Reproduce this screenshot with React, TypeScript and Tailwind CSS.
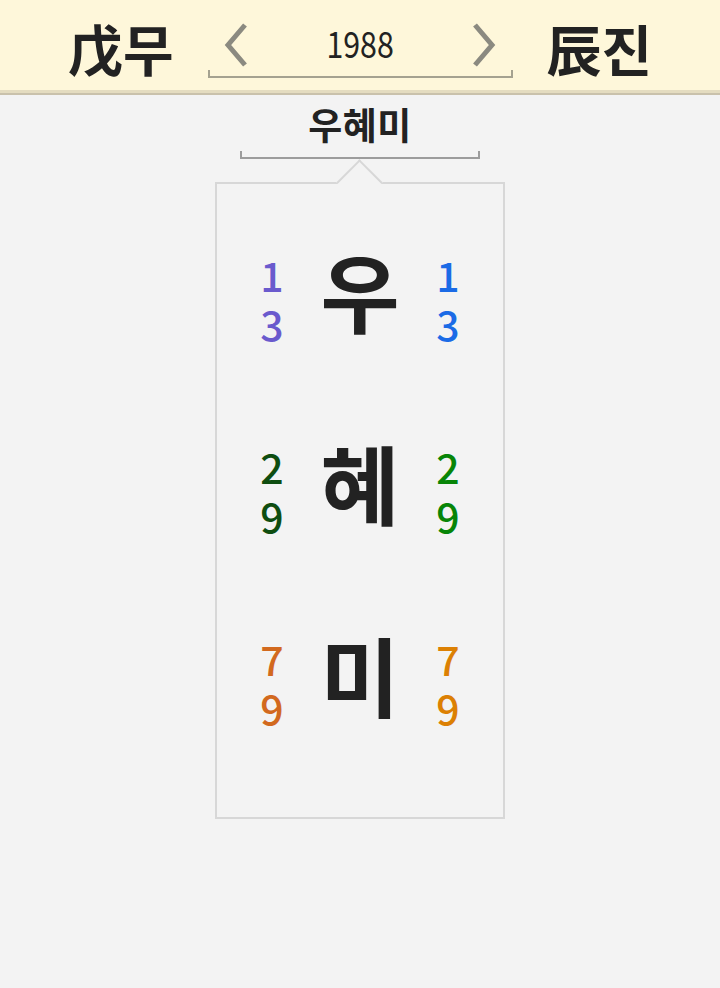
import React from 'react';

const FONT = '"Noto Sans CJK KR", "Noto Sans", sans-serif';

const ROWS = [
  { char: '우', left: '1\n3', right: '1\n3', leftColor: 'text-[#6a5acd]', rightColor: 'text-[#1b6be6]' },
  { char: '혜', left: '2\n9', right: '2\n9', leftColor: 'text-[#0e4d10]', rightColor: 'text-[#078507]' },
  { char: '미', left: '7\n9', right: '7\n9', leftColor: 'text-[#d2691e]', rightColor: 'text-[#dc8003]' },
];

function Chevron({ dir }: { dir: 'left' | 'right' }) {
  return (
    <svg width="26" height="44" viewBox="0 0 26 44" className="block">
      <polyline
        points={dir === 'left' ? '22,2 5,22 22,42' : '4,2 21,22 4,42'}
        fill="none"
        stroke="#8b8a80"
        strokeWidth="5"
      />
    </svg>
  );
}

function NumberStack({ digits, color }: { digits: string; color: string }) {
  return (
    <div className={`w-[60px] text-center pt-[18px] ${color}`}>
      <span className="whitespace-pre-line text-[41px] leading-[49px] font-medium">{digits}</span>
    </div>
  );
}

export default function App() {
  return (
    <div className="min-h-screen bg-[#f3f3f3] text-[#222]" style={{ fontFamily: FONT }}>
      {/* Header */}
      <header className="bg-[#fef7da]">
        <div className="h-[90px] flex items-center justify-center gap-[34px]">
          <span className="text-[55px] font-bold leading-none pt-[4px]">戊무</span>
          <div className="w-[305px] h-[90px] flex flex-col">
            <div className="flex-1 flex items-center justify-between px-[15px] pt-[14px]">
              <span className="pt-[6px]">
                <Chevron dir="left" />
              </span>
              <span className="text-[37px] leading-none scale-x-[0.82] inline-block">1988</span>
              <span className="pt-[6px]">
                <Chevron dir="right" />
              </span>
            </div>
            <div className="h-[8px] border-x-2 border-b-2 border-[#a5a290] mb-[12px]" />
          </div>
          <span className="text-[55px] font-bold leading-none pt-[4px]">辰진</span>
        </div>
        <div className="h-[3px] bg-[#e4dcc0]" />
        <div className="h-[2px] bg-[#c9c1ab]" />
      </header>

      {/* Name + bracket */}
      <div className="flex flex-col items-center">
        <div className="pt-[4px] text-[37px] font-bold leading-[50px] tracking-[0.5px]">우혜미</div>
        <div className="w-[240px] h-[8px] border-x-2 border-b-2 border-[#9c9c9c] mt-[2px]" />

        {/* Card with notch */}
        <div className="relative w-[290px] mt-[23px] border-2 border-[#d7d7d7] bg-[#f3f3f3] pt-[10px] pb-[47px]">
          <div className="absolute left-1/2 -top-[18px] -ml-[17px] w-[33px] h-[33px] rotate-45 bg-[#f3f3f3] border-l-2 border-t-2 border-[#d7d7d7]" />
          {ROWS.map((row) => (
            <div key={row.char} className="relative h-[192px] flex items-center justify-center">
              <NumberStack digits={row.left} color={row.leftColor} />
              <div className="w-[116px] text-center text-[86px] font-bold leading-none text-[#222]">
                {row.char}
              </div>
              <NumberStack digits={row.right} color={row.rightColor} />
            </div>
          ))}
        </div>
      </div>
    </div>
  );
}
